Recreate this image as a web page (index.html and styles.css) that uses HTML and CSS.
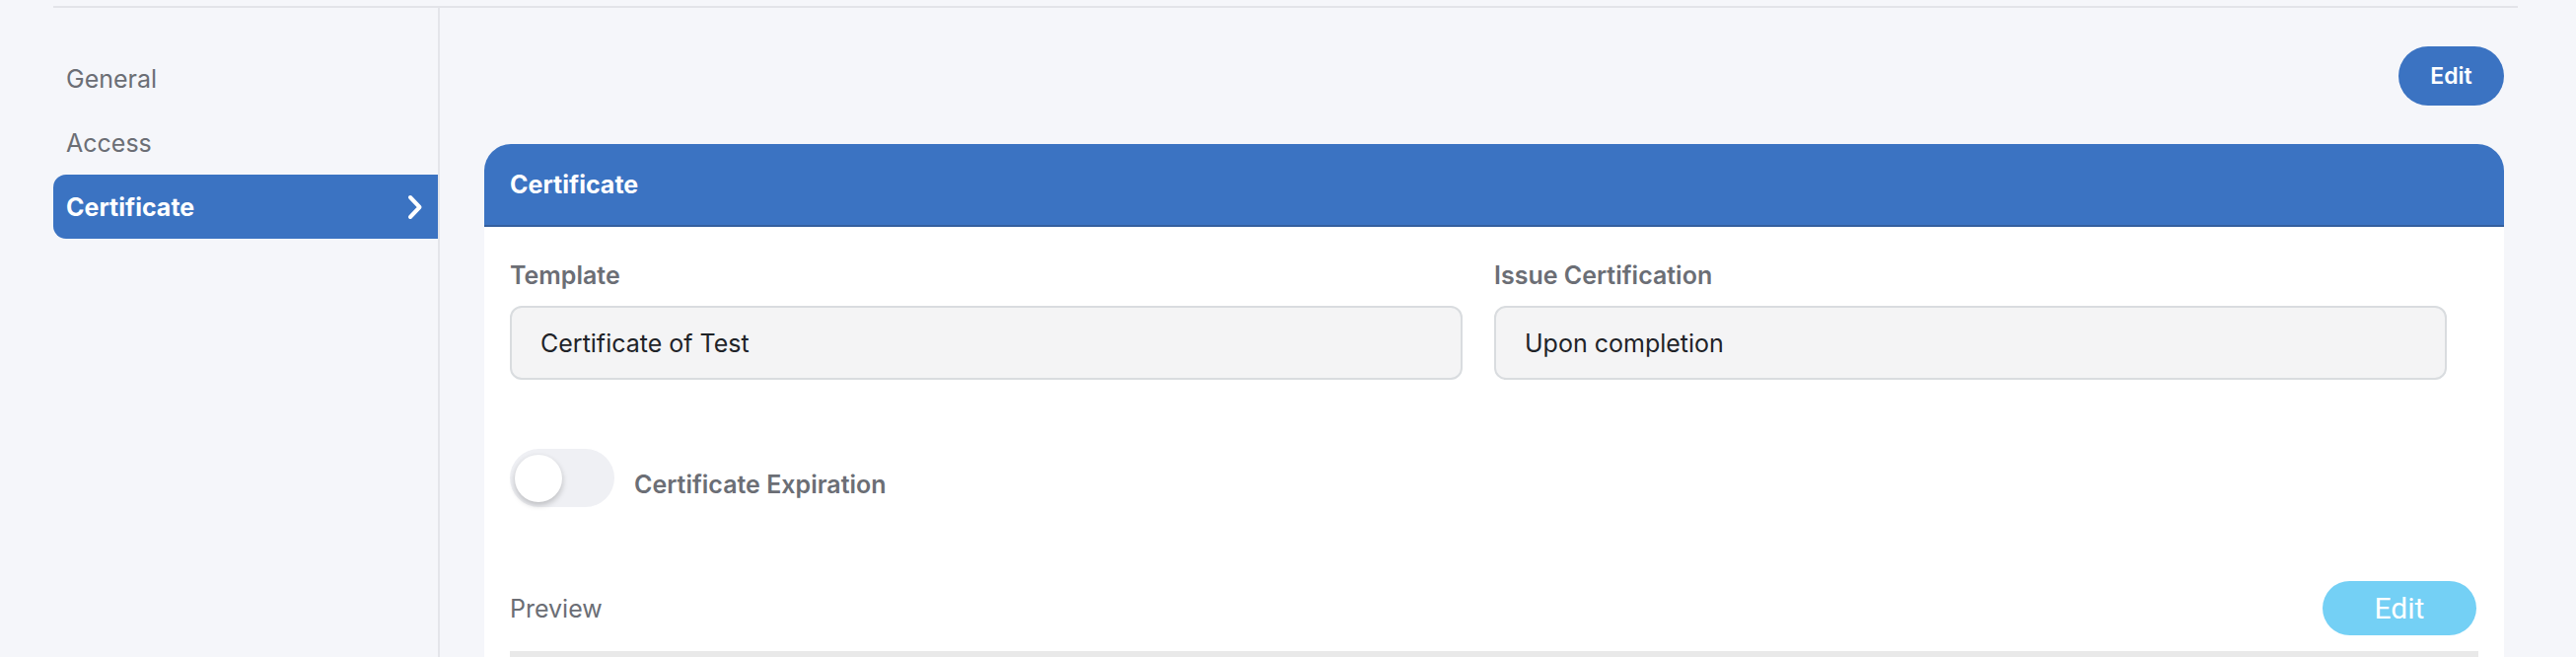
FILE: index.html
```html
<!DOCTYPE html>
<html lang="en">
<head>
<meta charset="utf-8">
<title>Certificate settings</title>
<link rel="stylesheet" href="styles.css">
</head>
<body>
<div class="page">
  <div class="frame">
    <nav class="sidebar">
      <a class="nav-item">General</a>
      <a class="nav-item">Access</a>
      <a class="nav-item active">Certificate
        <svg class="chev" width="16" height="26" viewBox="0 0 16 26"><path d="M3 3 L12.5 13 L3 23" fill="none" stroke="#fff" stroke-width="4" stroke-linecap="round" stroke-linejoin="round"/></svg>
      </a>
    </nav>
    <main class="main">
      <div class="toolbar">
        <button class="btn-primary">Edit</button>
      </div>
      <section class="card">
        <header class="card-header">Certificate</header>
        <div class="card-body">
          <div class="fields">
            <div class="field">
              <div class="label">Template</div>
              <div class="input">Certificate of Test</div>
            </div>
            <div class="field">
              <div class="label">Issue Certification</div>
              <div class="input">Upon completion</div>
            </div>
          </div>
          <div class="toggle-row">
            <div class="toggle"><div class="knob"></div></div>
            <span class="toggle-label">Certificate Expiration</span>
          </div>
          <div class="preview-row">
            <span class="preview-label">Preview</span>
            <button class="btn-light">Edit</button>
          </div>
          <div class="preview-box"></div>
        </div>
      </section>
    </main>
  </div>
</div>
</body>
</html>
```
FILE: styles.css
```css
html, body {
  margin: 0;
  padding: 0;
  overflow: hidden;
  height: 100%;
}
body {
  background: #f5f6fa;
  font-family: "Inter", "Lato", sans-serif;
  color: #6b6e75;
}
.page {
  padding: 6px 59px 0 54px;
}
.frame {
  border-top: 2px solid #e3e4e9;
  display: flex;
  min-height: 700px;
}
.sidebar {
  width: 390px;
  flex: none;
  border-right: 2px solid #e4e5ea;
  padding-top: 39px;
  display: flex;
  flex-direction: column;
}
.nav-item {
  height: 65px;
  display: flex;
  align-items: center;
  justify-content: space-between;
  padding: 0 15px 0 13px;
  font-size: 25px;
  color: #6b6e75;
  border-radius: 13px 0 0 13px;
}
.nav-item.active {
  background: #3b73c2;
  color: #fff;
  font-weight: 700;
}
.chev {
  display: block;
}
.main {
  flex: 1;
  padding: 39px 14px 0 45px;
}
.toolbar {
  display: flex;
  justify-content: flex-end;
}
.btn-primary {
  width: 107px;
  height: 60px;
  border: none;
  border-radius: 30px;
  background: #3b73c2;
  color: #fff;
  font-family: "Inter", sans-serif;
  font-weight: 600;
  font-size: 23px;
  padding: 0;
}
.card {
  margin-top: 39px;
  background: #fff;
  border-radius: 27px 27px 0 0;
}
.card-header {
  height: 82px;
  border-bottom: 2px solid #345f9e;
  background: #3b73c2;
  border-radius: 27px 27px 0 0;
  color: #fff;
  font-weight: 700;
  font-size: 25px;
  display: flex;
  align-items: center;
  padding-left: 26px;
}
.card-body {
  padding: 35px 26px 0 26px;
}
.fields {
  display: grid;
  grid-template-columns: 1fr 1fr;
}
.field {
  padding-right: 32px;
}
.label {
  font-size: 25px;
  font-weight: 600;
  line-height: 28px;
  color: #6b6e75;
}
.input {
  margin-top: 17px;
  height: 71px;
  border: 2px solid #d9dcdf;
  border-radius: 12px;
  background: #f4f4f5;
  display: flex;
  align-items: center;
  padding-left: 29px;
  font-size: 25px;
  color: #1f2328;
}
.toggle-row {
  margin-top: 70px;
  display: flex;
  align-items: center;
  gap: 20px;
}
.toggle {
  width: 106px;
  height: 59px;
  border-radius: 30px;
  background: #eff0f4;
  display: flex;
  align-items: center;
  padding-left: 5px;
  box-sizing: border-box;
}
.knob {
  width: 48px;
  height: 48px;
  border-radius: 50%;
  background: #fff;
  box-shadow: 0 3px 6px rgba(0, 0, 0, 0.22);
}
.toggle-label {
  font-size: 25px;
  font-weight: 600;
  color: #6b6e75;
  margin-top: 12px;
}
.preview-row {
  margin-top: 75px;
  display: flex;
  justify-content: space-between;
  align-items: center;
}
.preview-label {
  font-size: 25px;
  color: #6b6e75;
}
.btn-light {
  width: 156px;
  height: 55px;
  margin-right: 2px;
  border: none;
  border-radius: 28px;
  background: #74d0f5;
  color: #fff;
  font-family: "Roboto", sans-serif;
  font-size: 30px;
  padding: 0;
}
.preview-box {
  margin-top: 16px;
  height: 400px;
  background: #e9e9e9;
}
```
